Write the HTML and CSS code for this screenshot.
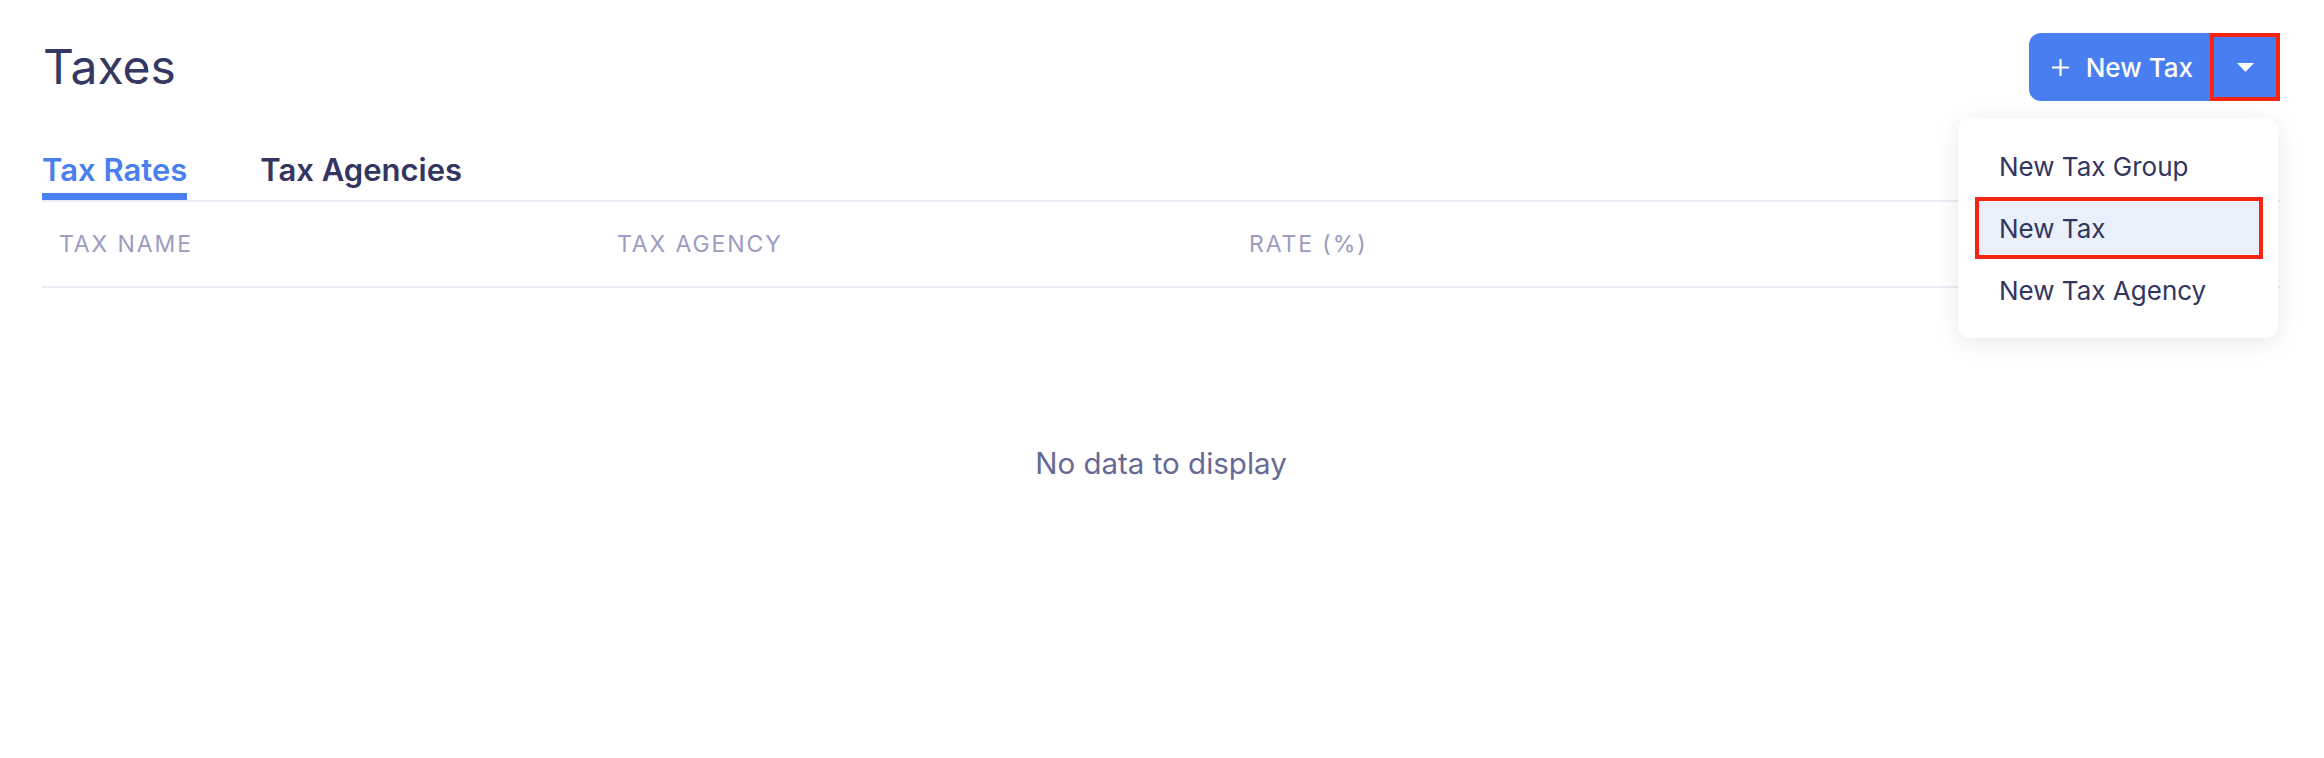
FILE: index.html
```html
<!DOCTYPE html>
<html lang="en">
<head>
<meta charset="utf-8" />
<title>Taxes</title>
<link rel="stylesheet" href="styles.css">
</head>
<body>
<div class="page">
    <div class="top">
        <h1 class="title">Taxes</h1>
        <div class="actions">
            <div class="split-btn">
                <button class="btn-main" type="button">
                    <svg class="plus" width="19" height="19" viewBox="0 0 19 19"><path d="M9.5 1v17M1 9.5h17" stroke="#fff" stroke-width="2.2" fill="none"/></svg>
                    <span>New Tax</span>
                </button>
                <button class="btn-caret" type="button">
                    <svg width="17" height="9" viewBox="0 0 17 9"><path d="M0 0h17L8.5 9z" fill="#fff"/></svg>
                </button>
            </div>
            <ul class="menu">
                <li class="menu-item">New Tax Group</li>
                <li class="menu-item active">New Tax</li>
                <li class="menu-item">New Tax Agency</li>
            </ul>
        </div>
    </div>

    <div class="tabs">
        <div class="tab selected">Tax Rates</div>
        <div class="tab">Tax Agencies</div>
    </div>

    <div class="table">
        <div class="thead">
            <div class="th col-name">Tax Name</div>
            <div class="th col-agency">Tax Agency</div>
            <div class="th col-rate">Rate (%)</div>
        </div>
        <div class="empty">No data to display</div>
    </div>
</div>
</body>
</html>
```

FILE: styles.css
```css
body {margin: 0; background: #fff; font-family: "Inter", "Noto Sans", sans-serif; color: #33365f;}
.page {padding: 33px 44px 0 42px;}

.top {display: flex; justify-content: space-between; align-items: center; height: 68px;}
.title {margin: 0 0 0 1px; font-size: 48px; font-weight: 400; line-height: 60px; color: #343862;}

.actions {position: relative;}
.split-btn {display: flex; height: 68px;}
.split-btn button {border: none; background: #487ef0; color: #fff; font-family: inherit; cursor: pointer; white-space: nowrap;}
.btn-main {display: flex; align-items: center; gap: 16px; padding: 0 17px 0 22px; border-radius: 12px 0 0 12px; font-size: 26px; font-weight: 500;}
.btn-caret {width: 70px; box-sizing: border-box; border: 4px solid #f5250f !important; display: flex; align-items: center; justify-content: center; padding: 0;}

.menu {position: absolute; top: 85px; right: 2px; width: 320px; margin: 0; padding: 17px 0; list-style: none; background: #fff; border-radius: 12px; box-shadow: 0 4px 22px rgba(40, 44, 90, 0.10); z-index: 5;}
.menu-item {height: 62px; margin: 0 15px 0 17px; padding: 0 24px; display: flex; align-items: center; font-size: 26px; color: #33365f; box-sizing: border-box;}
.menu-item.active {background: #eaf0fb; border: 4px solid #f5250f; padding-left: 20px;}

.tabs {display: flex; gap: 73px; margin-top: 49px; border-bottom: 2px solid #ebebf5;}
.tab {font-size: 31px; font-weight: 600; line-height: 40px; padding-bottom: 3px; border-bottom: 7px solid transparent; color: #33365f;}
.tab.selected {color: #4a7ff0; border-bottom-color: #4a7ff0;}

.thead {display: flex; align-items: center; height: 84px; border-bottom: 2px solid #ebebf5;}
.th {padding-left: 17px; box-sizing: border-box; font-size: 23px; letter-spacing: 1.9px; text-transform: uppercase; color: #9b9cc0;}
.col-name {width: 558px;}
.col-agency {width: 632px;}
.col-rate {flex: 1;}

.empty {padding-top: 155px; text-align: center; font-size: 29.5px; line-height: 40px; color: #666a94;}
```
